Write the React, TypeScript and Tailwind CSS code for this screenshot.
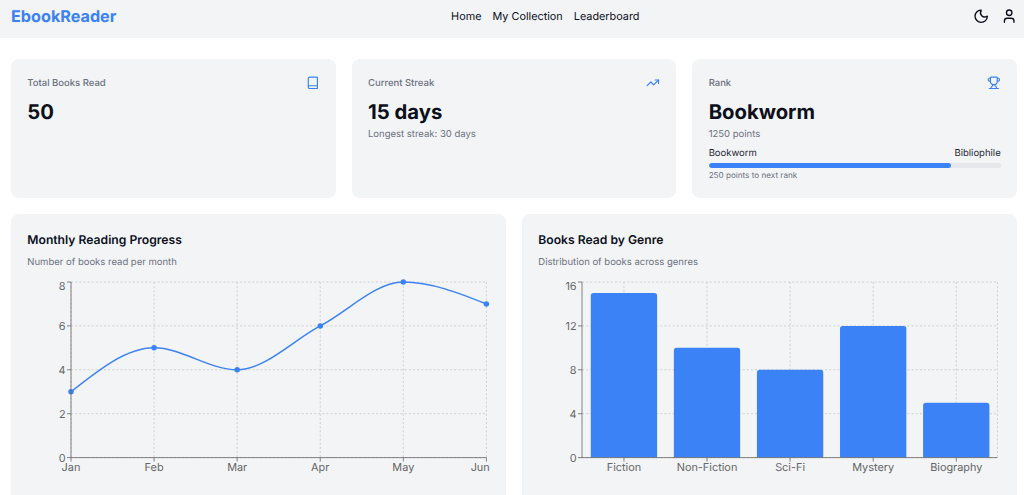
import { Book, Moon, TrendingUp, Trophy, User } from "lucide-react";
import type { ReactNode } from "react";

const PLOT = { left: 44, right: 459.4, top: 7, bottom: 182.6 };
const plotWidth = PLOT.right - PLOT.left;
const plotHeight = PLOT.bottom - PLOT.top;

const monthly = [
  { month: "Jan", books: 3 },
  { month: "Feb", books: 5 },
  { month: "Mar", books: 4 },
  { month: "Apr", books: 6 },
  { month: "May", books: 8 },
  { month: "Jun", books: 7 },
];

const genres = [
  { genre: "Fiction", count: 15 },
  { genre: "Non-Fiction", count: 10 },
  { genre: "Sci-Fi", count: 8 },
  { genre: "Mystery", count: 12 },
  { genre: "Biography", count: 5 },
];

type Point = { x: number; y: number };

// Monotone cubic interpolation, so the curve never overshoots a data point.
function monotonePath(points: Point[]) {
  const n = points.length;
  const slopes = points.slice(1).map((p, i) => (p.y - points[i].y) / (p.x - points[i].x));
  const tangents = new Array<number>(n).fill(0);
  for (let i = 1; i < n - 1; i++) {
    const a = slopes[i - 1];
    const b = slopes[i];
    tangents[i] =
      (Math.sign(a) + Math.sign(b)) * Math.min(Math.abs(a), Math.abs(b), Math.abs((a + b) / 4)) || 0;
  }
  tangents[0] = (3 * slopes[0] - tangents[1]) / 2;
  tangents[n - 1] = (3 * slopes[n - 2] - tangents[n - 2]) / 2;
  let d = `M${points[0].x},${points[0].y}`;
  for (let i = 1; i < n; i++) {
    const p = points[i - 1];
    const q = points[i];
    const h = (q.x - p.x) / 3;
    d += `C${p.x + h},${p.y + h * tangents[i - 1]},${q.x - h},${q.y - h * tangents[i]},${q.x},${q.y}`;
  }
  return d;
}

function ChartFrame({
  ticks,
  gridX,
  labels,
  children,
}: {
  ticks: number[];
  gridX: number[];
  labels: { x: number; tickX: number; text: string }[];
  children: ReactNode;
}) {
  const max = ticks[ticks.length - 1];
  const yOf = (v: number) => PLOT.bottom - (v / max) * plotHeight;
  return (
    <svg width="463" height="206" viewBox="0 0 463 206" className="block overflow-visible">
      <g stroke="#ccc" strokeWidth="0.9" strokeDasharray="2.06 2.06">
        {ticks.map((t) => (
          <line key={t} x1={PLOT.left} x2={PLOT.right} y1={yOf(t)} y2={yOf(t)} />
        ))}
        {gridX.map((x) => (
          <line key={x} x1={x} x2={x} y1={PLOT.top} y2={PLOT.bottom} />
        ))}
      </g>
      {children}
      <g stroke="#666" strokeWidth="0.8">
        <line x1={PLOT.left} x2={PLOT.left} y1={PLOT.top} y2={PLOT.bottom} />
        <line x1={PLOT.left} x2={PLOT.right} y1={PLOT.bottom} y2={PLOT.bottom} />
        {ticks.map((t) => (
          <line key={t} x1={PLOT.left - 4} x2={PLOT.left} y1={yOf(t)} y2={yOf(t)} />
        ))}
        {labels.map((l) => (
          <line key={l.text} x1={l.tickX} x2={l.tickX} y1={PLOT.bottom} y2={PLOT.bottom + 4} />
        ))}
      </g>
      <g fill="#666" fontSize="10.9" className="[text-rendering:geometricPrecision]">
        {ticks.map((t) => (
          <text key={t} x={PLOT.left - 5.4} y={t === max ? PLOT.top + 8.4 : yOf(t) + 4} textAnchor="end">
            {t}
          </text>
        ))}
        {labels.map((l) => (
          <text key={l.text} x={l.x} y={PLOT.bottom + 13.2} textAnchor="middle">
            {l.text}
          </text>
        ))}
      </g>
    </svg>
  );
}

function LineChart() {
  const points = monthly.map((m, i) => ({
    x: PLOT.left + (i * plotWidth) / (monthly.length - 1),
    y: PLOT.bottom - (m.books / 8) * plotHeight,
  }));
  return (
    <ChartFrame
      ticks={[0, 2, 4, 6, 8]}
      gridX={points.map((p) => p.x)}
      labels={monthly.map((m, i) => ({
        text: m.month,
        tickX: points[i].x,
        x: i === monthly.length - 1 ? points[i].x - 6.2 : points[i].x,
      }))}
    >
      <path d={monotonePath(points)} fill="none" stroke="#3b82f6" strokeWidth="1.5" />
      {points.map((p) => (
        <circle key={p.x} cx={p.x} cy={p.y} r="2.75" fill="#3b82f6" />
      ))}
    </ChartFrame>
  );
}

function BarChart() {
  const band = plotWidth / genres.length;
  const centers = genres.map((_, i) => PLOT.left + 0.4 + band * (i + 0.5));
  const w = 66.3;
  const r = 2.7;
  return (
    <ChartFrame
      ticks={[0, 4, 8, 12, 16]}
      gridX={[...centers, PLOT.right]}
      labels={genres.map((g, i) => ({ text: g.genre, tickX: centers[i], x: centers[i] }))}
    >
      {genres.map((g, i) => {
        const x = centers[i] - w / 2;
        const y = PLOT.bottom - (g.count / 16) * plotHeight;
        return (
          <path
            key={g.genre}
            fill="#3b82f6"
            d={`M${x},${PLOT.bottom}V${y + r}a${r},${r} 0 0 1 ${r},${-r}H${x + w - r}a${r},${r} 0 0 1 ${r},${r}V${PLOT.bottom}Z`}
          />
        );
      })}
    </ChartFrame>
  );
}

function StatCard({ title, icon, value, children }: { title: string; icon: ReactNode; value: string; children?: ReactNode }) {
  return (
    <section className="h-[139px] rounded-lg bg-[#f3f4f6] px-[16.3px] pt-[16.4px]">
      <div className="flex h-[14px] items-center justify-between text-[#3b82f6]">
        <h2 className="mt-[3.6px] text-[9.5px] font-medium text-[#6b7280]">{title}</h2>
        {icon}
      </div>
      <p className="mt-[9px] text-[20.3px] leading-[28px] font-bold text-[#0b101c]">{value}</p>
      {children}
    </section>
  );
}

function ChartCard({ title, subtitle, children }: { title: string; subtitle: string; children: ReactNode }) {
  return (
    <section className="h-[300px] rounded-lg bg-[#f3f4f6] px-[16.3px] pt-[16.4px]">
      <h2 className="text-[12.15px] leading-[19px] font-semibold text-[#0b101c]">{title}</h2>
      <p className="mt-[7px] text-[9.5px] leading-[14px] text-[#6b7280]">{subtitle}</p>
      <div className="mt-[5px]">{children}</div>
    </section>
  );
}

export default function App() {
  return (
    <div className="h-[495px] overflow-hidden bg-white font-['Inter',sans-serif] text-[#0b101c] [text-rendering:geometricPrecision]">
      <header className="flex h-[38px] items-center justify-between bg-[#f3f4f6] pr-[7px] pb-[5px] pl-[11px]">
        <a className="text-[16.2px] font-bold text-[#3b82f6]">EbookReader</a>
        <nav className="flex justify-center gap-[11px] pl-[1px] text-[10.85px] whitespace-nowrap">
          <a>Home</a>
          <a>My Collection</a>
          <a>Leaderboard</a>
        </nav>
        <div className="flex justify-end gap-[11px]">
          <Moon size={16.4} />
          <User size={16.4} />
        </div>
      </header>
      <main className="pt-[21px] pr-[7px] pl-[11px]">
        <div className="grid grid-cols-3 gap-[16px]">
          <StatCard title="Total Books Read" icon={<Book size={13.7} />} value="50" />
          <StatCard title="Current Streak" icon={<TrendingUp size={13.7} />} value="15 days">
            <p className="mt-[2px] text-[9.5px] leading-[14px] text-[#6b7280]">Longest streak: 30 days</p>
          </StatCard>
          <StatCard title="Rank" icon={<Trophy size={13.7} />} value="Bookworm">
            <p className="mt-[2px] text-[9.5px] leading-[14px] text-[#6b7280]">1250 points</p>
            <div className="mt-[5px] flex justify-between text-[9.5px] leading-[14px] text-[#1f2937]">
              <span>Bookworm</span>
              <span>Bibliophile</span>
            </div>
            <div className="mt-[1.3px] h-[5.5px] overflow-hidden rounded-full bg-[#e5e7eb]">
              <div className="h-full w-[83%] rounded-full bg-[#3b82f6]" />
            </div>
            <p className="mt-[2px] text-[8.15px] leading-[11px] text-[#6b7280]">250 points to next rank</p>
          </StatCard>
        </div>
        <div className="mt-[16px] grid grid-cols-2 gap-[16px]">
          <ChartCard title="Monthly Reading Progress" subtitle="Number of books read per month">
            <LineChart />
          </ChartCard>
          <ChartCard title="Books Read by Genre" subtitle="Distribution of books across genres">
            <BarChart />
          </ChartCard>
        </div>
      </main>
    </div>
  );
}
